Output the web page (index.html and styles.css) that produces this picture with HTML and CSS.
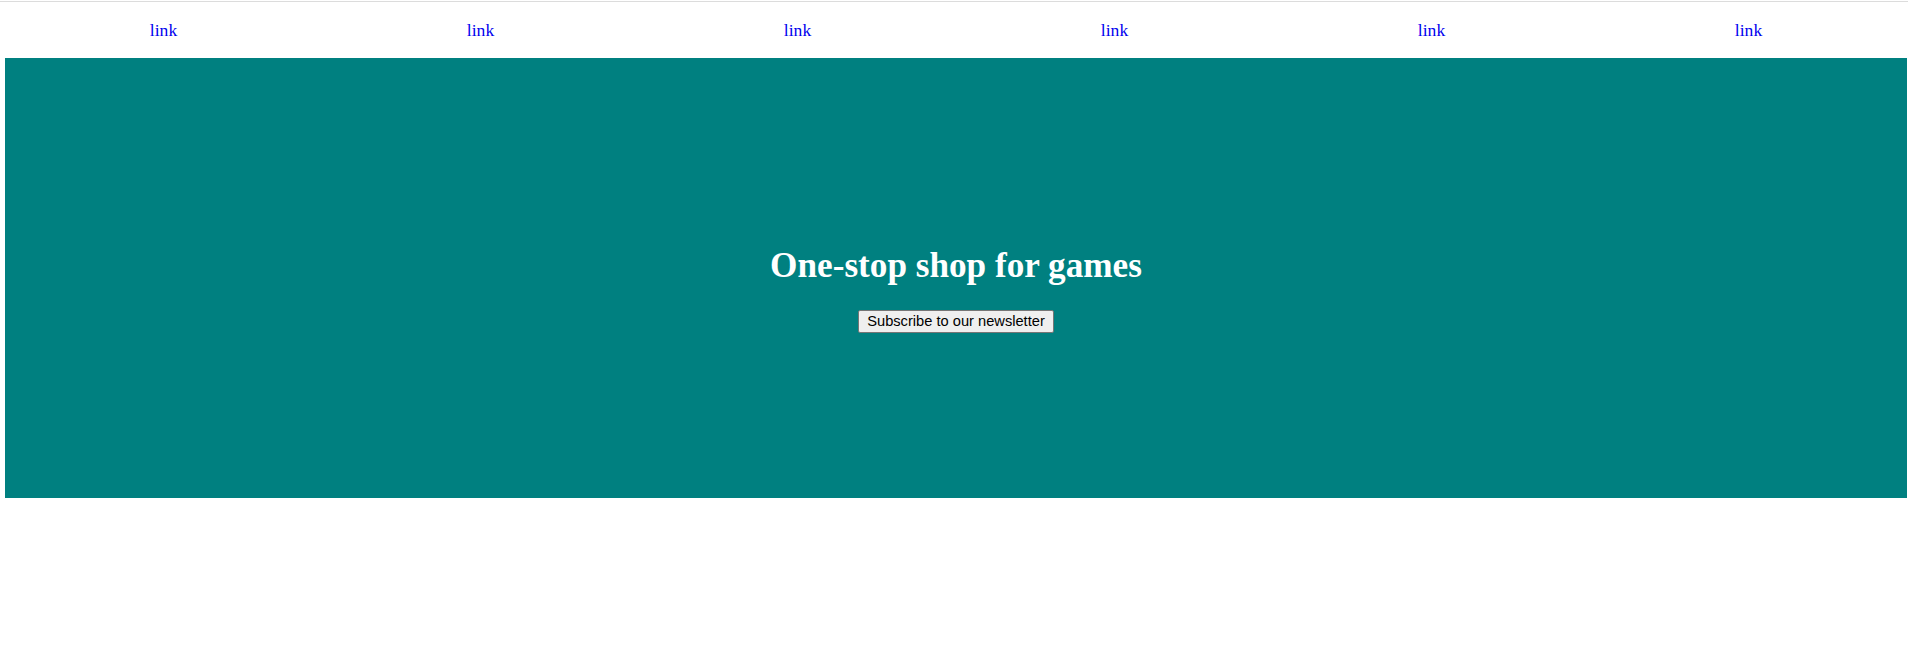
FILE: index.html
```html
<!DOCTYPE html>
<html>
<head>
<meta charset="utf-8">
<link rel="stylesheet" href="styles.css">
</head>
<body>
<div class="topline"></div>
<nav class="nav">
  <a class="nav-link" href="#">link</a>
  <a class="nav-link" href="#">link</a>
  <a class="nav-link" href="#">link</a>
  <a class="nav-link" href="#">link</a>
  <a class="nav-link" href="#">link</a>
  <a class="nav-link" href="#">link</a>
</nav>
<section class="hero">
  <h1 class="hero-title">One-stop shop for games</h1>
  <button class="hero-btn" type="button">Subscribe to our newsletter</button>
</section>
</body>
</html>
```
FILE: styles.css
```css
html, body {
  margin: 0;
  padding: 0;
  background: #ffffff;
}
body {
  font-family: "Liberation Serif", "Times New Roman", serif;
}
.topline {
  margin-top: 1px;
  height: 1px;
  background: #dcdcdc;
}
.nav {
  display: grid;
  grid-template-columns: repeat(6, 1fr);
  align-items: center;
  height: 56px;
  padding: 0 1px 0 5px;
}
.nav-link {
  justify-self: center;
  color: #0000ee;
  text-decoration: none;
  font-size: 17.6px;
  line-height: 20px;
}
.hero {
  margin: 0 1px 0 5px;
  height: 440px;
  background: #008080;
  display: flex;
  flex-direction: column;
  align-items: center;
  justify-content: center;
}
.hero-title {
  margin: 23.6px 0;
  color: #ffffff;
  font-size: 35.2px;
  font-weight: bold;
  line-height: 40.5px;
}
.hero-btn {
  font-family: "Liberation Sans", Arial, sans-serif;
  font-size: 14.67px;
  color: #000000;
  background: #efefef;
  border: 1px solid #767676;
  border-radius: 2px;
  padding: 0 8px;
  height: 23px;
  line-height: 19px;
}
```
